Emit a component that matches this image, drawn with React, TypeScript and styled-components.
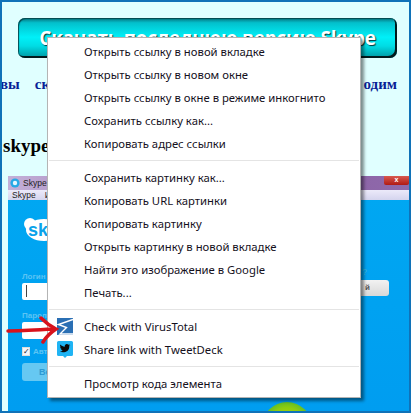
import React from 'react';
import styled, { createGlobalStyle } from 'styled-components';

const GlobalStyle = createGlobalStyle`
  html, body {
    margin: 0;
    padding: 0;
    background: #1072b8;
  }
`;

const Frame = styled.div`
  position: relative;
  box-sizing: border-box;
  width: 411px;
  height: 413px;
  border: 2px solid #1072b8;
  background: #e0ffff;
  overflow: hidden;
`;

const DownloadButton = styled.div`
  box-sizing: border-box;
  width: 379px;
  height: 40px;
  margin: 16px 0 0 16px;
  padding-top: 8px;
  border-radius: 7px;
  background: linear-gradient(#06707a 0, #03c0cc 12%, #00f0f8 48%, #00dce4 70%, #00a4ae 94%);
  box-shadow: inset -2px -2px 0 #02191c, inset 1px 1px 1px #04484e;
  color: #fff;
  font: bold 19px/24px "Open Sans", sans-serif;
  letter-spacing: -0.25px;
  text-align: center;
  white-space: pre;
  text-shadow: 1px 1px 1px #01363c;
`;

const LeadLine = styled.div`
  display: flex;
  justify-content: space-between;
  width: 397px;
  margin: 16px 0 0 -2px;
  color: #0a1f96;
  font: bold 15px/20px "Liberation Serif", serif;
`;

const LeadStart = styled.div`
  display: flex;
  gap: 15px;
`;

const SectionTitle = styled.div`
  margin: 40px 0 0 1px;
  color: #000;
  font: bold 19px/24px "Liberation Serif", serif;
`;

const Shot = styled.div`
  width: 401px;
  height: 235px;
  margin: 18px 0 0 6px;
  background: linear-gradient(#00a8f2 0, #009df0 100%);
  font-family: "Liberation Sans", sans-serif;
`;

const ShotTitleBar = styled.div`
  display: flex;
  align-items: center;
  gap: 3px;
  height: 14px;
  padding-left: 2px;
  background: linear-gradient(90deg, #c4b0d8 0, #a284bc 30%, #8a5fa4 70%, #8f6aab 100%);
  color: #222;
  font-size: 8.5px;
`;

const ShotClose = styled.div`
  width: 25px;
  height: 9px;
  margin: -5px 0 0 auto;
  border-radius: 0 0 2px 2px;
  background: linear-gradient(#d85a50, #b01a14);
  color: #fff;
  font: bold 7px/8px "Liberation Sans", sans-serif;
  text-align: center;
`;

const ShotMenuBar = styled.div`
  display: flex;
  gap: 9px;
  height: 10px;
  padding-left: 4px;
  background: linear-gradient(#eceafa, #d4d4ee);
  color: #222;
  font-size: 8.5px;
  line-height: 10px;
`;

const ShotBody = styled.div`
  display: grid;
  grid-template-columns: 1fr 62px;
  padding: 17px 20px 0 14px;
`;

const ShotForm = styled.div`
  display: flex;
  flex-direction: column;
  align-items: flex-start;
`;

const ShotLogo = styled.svg`
  display: block;
  width: 44px;
  height: 26px;
  margin-bottom: 29px;
`;

const ShotLabel = styled.div`
  height: 9px;
  color: #5cc4f4;
  font-size: 8px;
  font-weight: bold;
  line-height: 9px;
`;

const ShotInput = styled.div<{ $after: number }>`
  box-sizing: border-box;
  width: 200px;
  height: 17px;
  margin: 2px 0 ${p => p.$after}px;
  padding: 2px 0 0 4px;
  border-radius: 2px;
  background: #fff;
`;

const ShotCaret = styled.div`
  width: 1px;
  height: 12px;
  background: #444;
`;

const ShotCheckRow = styled.div`
  display: flex;
  align-items: center;
  gap: 3px;
  height: 10px;
  margin: 1px 0 7px;
`;

const ShotCheckbox = styled.div`
  box-sizing: border-box;
  width: 8px;
  height: 9px;
  border: 1px solid #ddd;
  background: #f4f6fa;
  color: #223;
  font: bold 8px/7px "DejaVu Sans", sans-serif;
`;

const ShotSubmit = styled.div`
  box-sizing: border-box;
  width: 120px;
  height: 18px;
  padding-left: 17px;
  border-radius: 3px;
  background: #66c8f2;
  color: #2c9ad4;
  font-size: 9px;
  font-weight: bold;
  line-height: 18px;
`;

const ShotAside = styled.div`
  display: flex;
  flex-direction: column;
  align-items: flex-end;
  padding-top: 50px;
`;

const ShotHint = styled.div`
  height: 10px;
  margin-right: 22px;
  color: #3ab6d8;
  font-size: 9px;
  line-height: 10px;
`;

const ShotSideButton = styled.div`
  box-sizing: border-box;
  width: 60px;
  height: 16px;
  margin-top: 3px;
  padding-right: 19px;
  border-radius: 3px;
  background: linear-gradient(#f2f2f2, #d8d8d8);
  color: #555;
  font-size: 8px;
  font-weight: bold;
  line-height: 16px;
  text-align: right;
`;

const GreenBlob = styled.div`
  position: absolute;
  left: 260px;
  top: 400px;
  width: 50px;
  height: 50px;
  border-radius: 50%;
  background: radial-gradient(circle at 50% 50%, #c8e000 0, #8ccc10 55%, #3fb23a 85%, #1ca6a0 100%);
`;

const ContextMenu = styled.div`
  position: absolute;
  left: 45px;
  top: 35px;
  box-sizing: border-box;
  width: 314px;
  height: 361px;
  padding: 2px 1px;
  border: 1px solid #b4b4b4;
  background: #fff;
  box-shadow: 3px 3px 3px rgba(0, 0, 0, 0.45);
`;

const MenuRow = styled.div`
  display: flex;
  align-items: center;
  height: 23px;
  padding-left: 35px;
  color: #14101c;
  font: 11.3px/23px "Noto Sans", sans-serif;
  white-space: nowrap;
`;

const MenuIconSlot = styled.div`
  position: absolute;
  left: 9px;
  width: 16px;
  height: 17px;
`;

const MenuDivider = styled.div`
  height: 1px;
  margin: 5px 0;
  background: #e4e4e4;
`;

const RedArrow = styled.svg`
  position: absolute;
  left: 4px;
  top: 314px;
  width: 54px;
  height: 28px;
`;

const firstGroup = [
  'Открыть ссылку в новой вкладке',
  'Открыть ссылку в новом окне',
  'Открыть ссылку в окне в режиме инкогнито',
  'Сохранить ссылку как...',
  'Копировать адрес ссылки',
];

const secondGroup = [
  'Сохранить картинку как...',
  'Копировать URL картинки',
  'Копировать картинку',
  'Открыть картинку в новой вкладке',
  'Найти это изображение в Google',
  'Печать...',
];

function VirusTotalIcon() {
  return (
    <svg width="16" height="17" viewBox="0 0 16 17">
      <rect width="16" height="17" fill="#2a6fb4" />
      <path d="M16 1.5 1.5 6.5 9.5 9.500 3 16H16" fill="none" stroke="#fff" strokeWidth="1.4" />
    </svg>
  );
}

function TweetDeckIcon() {
  return (
    <svg width="16" height="17" viewBox="0 0 16 17">
      <path d="M1.5 0h13A1.5 1.5 0 0 1 16 1.5v12a1.5 1.5 0 0 1-1.5 1.5H10l-2 2-2-2H1.5A1.5 1.5 0 0 1 0 13.5v-12A1.5 1.5 0 0 1 1.5 0z" fill="#1fb4f4" />
      <path d="M13 4.2c-.4.2-.8.3-1.2.3.4-.3.8-.7.9-1.2-.4.3-.9.4-1.3.5a2.1 2.1 0 0 0-3.6 1.9C6 5.6 4.5 4.8 3.4 3.5c-.6 1-.3 2.2.6 2.8-.3 0-.7-.1-.9-.3 0 1 .7 1.9 1.7 2.1-.3.1-.6.1-.9 0 .3.9 1.1 1.5 2 1.5-.9.7-2 1-3.1.9 2.7 1.7 9.8 1.1 9.5-5.500.4-.3.8-.7 1.1-1.1z" fill="#0a0a0a" />
    </svg>
  );
}

export default function App() {
  return (
    <>
      <GlobalStyle />
      <Frame>
        <DownloadButton>Скачать последнюю версию Skype</DownloadButton>
        <LeadLine>
          <LeadStart>
            <span>вы</span>
            <span>ск</span>
          </LeadStart>
          <span>одим</span>
        </LeadLine>
        <SectionTitle>skype</SectionTitle>
        <Shot>
          <ShotTitleBar>
            <svg width="10" height="10" viewBox="0 0 10 10">
              <circle cx="5" cy="5" r="4.6" fill="#27a9e6" />
              <circle cx="5" cy="5" r="2.2" fill="#e6f6ff" />
            </svg>
            Skype
            <ShotClose>x</ShotClose>
          </ShotTitleBar>
          <ShotMenuBar>
            <span>Skype</span>
            <span>Ин</span>
          </ShotMenuBar>
          <ShotBody>
            <ShotForm>
              <ShotLogo viewBox="0 0 44 26">
                <circle cx="8" cy="7" r="6" fill="#fff" />
                <circle cx="36" cy="19" r="6" fill="#fff" />
                <ellipse cx="22" cy="13" rx="18" ry="11" fill="#fff" />
                <text x="6" y="19" fontFamily="Liberation Sans" fontWeight="bold" fontSize="18" fill="#0aa2ea">sky</text>
              </ShotLogo>
              <ShotLabel>Логин S</ShotLabel>
              <ShotInput $after={11}>
                <ShotCaret />
              </ShotInput>
              <ShotLabel>Парол</ShotLabel>
              <ShotInput $after={6} />
              <ShotCheckRow>
                <ShotCheckbox>✓</ShotCheckbox>
                <ShotLabel>Авто</ShotLabel>
              </ShotCheckRow>
              <ShotSubmit>Во</ShotSubmit>
            </ShotForm>
            <ShotAside>
              <ShotHint>?</ShotHint>
              <ShotSideButton>й</ShotSideButton>
            </ShotAside>
          </ShotBody>
        </Shot>
        <GreenBlob />
        <ContextMenu>
          {firstGroup.map(label => (
            <MenuRow key={label}>{label}</MenuRow>
          ))}
          <MenuDivider />
          {secondGroup.map(label => (
            <MenuRow key={label}>{label}</MenuRow>
          ))}
          <MenuDivider />
          <MenuRow>
            <MenuIconSlot>
              <VirusTotalIcon />
            </MenuIconSlot>
            Check with VirusTotal
          </MenuRow>
          <MenuRow>
            <MenuIconSlot>
              <TweetDeckIcon />
            </MenuIconSlot>
            Share link with TweetDeck
          </MenuRow>
          <MenuDivider />
          <MenuRow>Просмотр кода элемента</MenuRow>
        </ContextMenu>
        <RedArrow viewBox="0 0 54 28">
          <path d="M2 15 C15 15 30 14 47 13" fill="none" stroke="#d8121c" strokeWidth="3.5" strokeLinecap="round" />
          <path d="M35 2 C39 6 44 10 50 13 C44 17 40 21 37 26" fill="none" stroke="#d8121c" strokeWidth="3.5" strokeLinecap="round" />
        </RedArrow>
      </Frame>
    </>
  );
}
